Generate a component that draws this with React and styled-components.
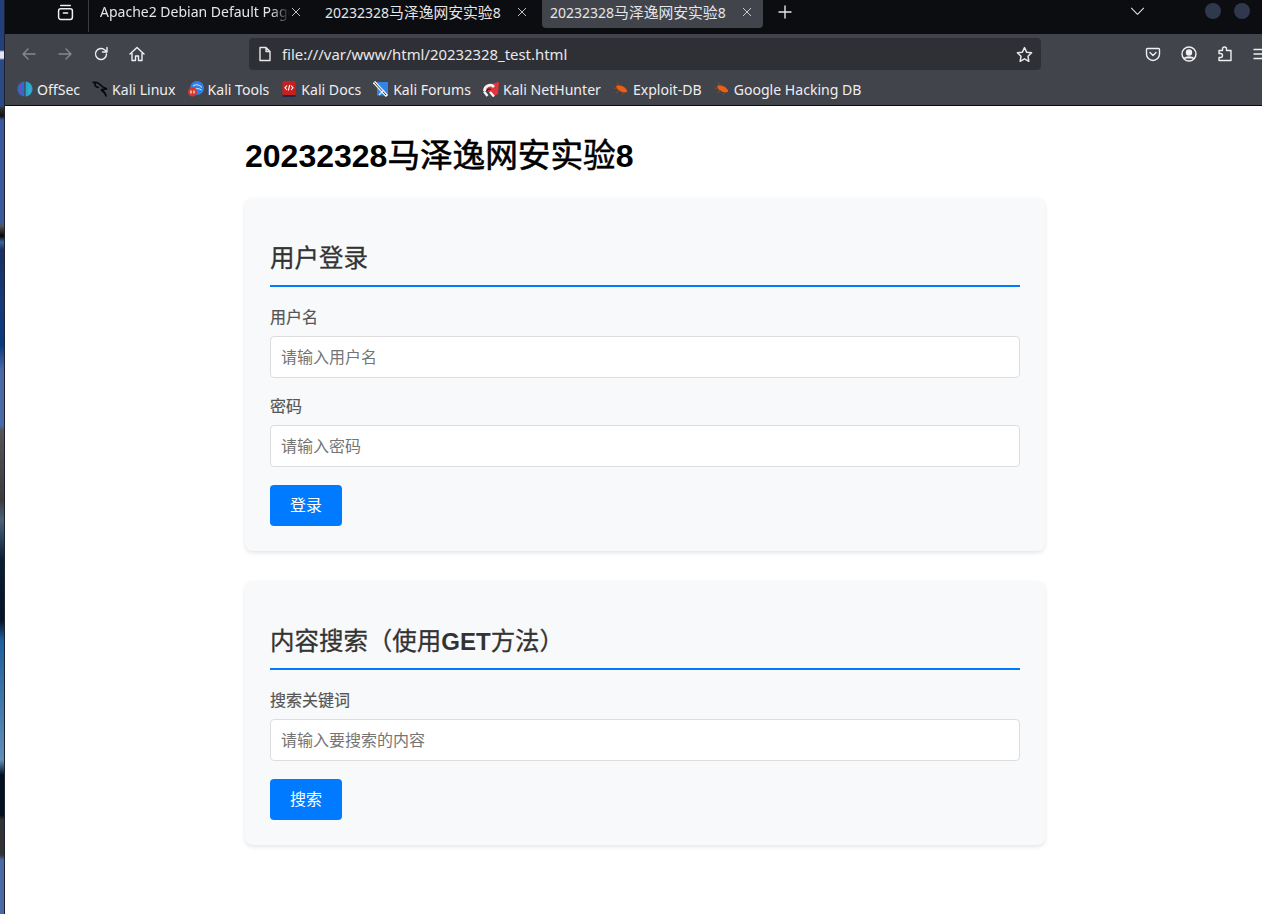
import React from "react";
import styled, { createGlobalStyle } from "styled-components";

const GlobalStyle = createGlobalStyle`
  html, body {
    margin: 0;
    padding: 0;
    height: 914px;
    overflow: hidden;
    background: #fff;
  }
`;

const SANS = `"Liberation Sans", "Noto Sans CJK SC", sans-serif`;
const CHROME = `"Noto Sans", "Noto Sans CJK SC", sans-serif`;

const Desktop = styled.div`
  display: flex;
  width: 1262px;
  height: 914px;
  overflow: hidden;
`;
const Wallpaper = styled.div`
  flex: 0 0 4px;
  background: linear-gradient(
    to bottom,
    #24407a 0, #24407a 50px, #dfe6f0 52px, #dfe6f0 58px, #2a4a86 60px,
    #2a4a86 106px, #333 108px, #111 116px, #3a5a9c 120px, #3a5a9c 222px,
    #555 226px, #050505 236px, #3e659f 242px, #1a3060 250px, #173a78 300px,
    #0a3a80 345px, #4a6aa6 370px, #4a6aa6 426px, #555 430px, #3c3c3c 500px,
    #49637a 520px, #0a1d33 560px, #051426 620px, #1f5f9c 640px, #5f8fb8 760px,
    #02101f 775px, #02101f 815px, #333 820px, #333 855px, #4a6aa6 860px,
    #4a6aa6 914px
  );
  border-right: 1px solid #1c2030;
`;
const Browser = styled.div`
  flex: 0 0 1280px;
  display: flex;
  flex-direction: column;
`;
const TabBar = styled.div`
  height: 34px;
  background: #0c0d11;
  display: flex;
  align-items: flex-start;
  font: 14px ${CHROME};
  color: #e6e6e8;
`;
const TabsButton = styled.div`
  width: 84px;
  height: 32px;
  border-right: 1px solid #3c3d42;
  box-sizing: border-box;
  display: flex;
  align-items: center;
  padding: 0 0 8px 52px;
  color: #f0f0f2;
`;
const Tab = styled.div`
  width: ${(p) => p.$w}px;
  height: 28px;
  box-sizing: border-box;
  padding: 0 ${(p) => p.$pr}px 5px ${(p) => p.$pl}px;
  margin-left: ${(p) => p.$ml || 0}px;
  display: flex;
  align-items: center;
  justify-content: space-between;
  background: ${(p) => (p.$active ? "#42444c" : "transparent")};
  border-radius: 0 0 4px 4px;
  white-space: nowrap;
`;
const TabTitle = styled.span`
  overflow: hidden;
  flex: 1;
  mask-image: ${(p) =>
    p.$fade ? "linear-gradient(to right, #000 90%, transparent)" : "none"};
`;
const TabHan = styled.span`
  font-size: 14.8px;
`;
const NewTab = styled.div`
  margin-left: 14px;
  height: 24px;
  display: flex;
  align-items: center;
`;
const TabBarEnd = styled.div`
  margin-left: 337px;
  display: flex;
  align-items: center;
  height: 22px;
  color: #e6e6e8;
`;
const WindowDot = styled.span`
  width: 16px;
  height: 16px;
  border-radius: 50%;
  background: #30384e;
  margin-left: ${(p) => p.$ml}px;
`;
const Toolbar = styled.div`
  height: 38px;
  box-sizing: border-box;
  padding: 2px 0 0 6px;
  background: #42444c;
  display: flex;
  align-items: center;
  color: #f0f0f2;
`;
const NavButton = styled.div`
  width: 36px;
  display: flex;
  justify-content: center;
  color: ${(p) => (p.$dim ? "#868890" : "#f0f0f2")};
`;
const UrlBar = styled.div`
  margin-left: 94px;
  width: 792px;
  height: 32px;
  background: #2f3036;
  border-radius: 4px;
  display: flex;
  align-items: center;
  padding: 0 8px;
  box-sizing: border-box;
  font: 14.9px ${CHROME};
  color: #e8e8ea;
`;
const UrlText = styled.span`
  flex: 1;
  margin-left: 9px;
`;
const ToolbarIcons = styled.div`
  margin-left: 104px;
  display: flex;
  align-items: center;
  gap: 20px;
`;
const BookmarksBar = styled.div`
  height: 34px;
  box-sizing: border-box;
  padding: 1px 0 0 12px;
  background: #42444c;
  border-bottom: 1px solid #0c0d11;
  display: flex;
  align-items: center;
  font: 14.08px ${CHROME};
  color: #eeeef0;
  white-space: nowrap;
`;
const Bookmark = styled.div`
  display: flex;
  align-items: center;
  gap: 4px;
  margin-right: 12px;
`;
const Page = styled.main`
  flex: 1;
  background: #fff;
  font-family: ${SANS};
`;
const Container = styled.div`
  width: 800px;
  margin: 0 auto;
`;
const Title = styled.h1`
  margin: 0;
  padding-top: 29px;
  height: 63px;
  font-size: 32px;
  line-height: 42px;
  font-weight: 700;
  color: #000;
`;
const Han = styled.span`
  font-size: 1.02em;
  font-weight: 400;
  -webkit-text-stroke: ${(p) => p.$stroke}px currentColor;
`;
const Card = styled.section`
  background: #f8f9fa;
  border-radius: 8px;
  padding: 25px;
  margin-bottom: 30px;
  box-shadow: 0 2px 4px rgba(0, 0, 0, 0.1);
`;
const CardTitle = styled.h2`
  margin: 18px 0 20px;
  padding-bottom: 9px;
  border-bottom: 2px solid #007bff;
  font-size: 24px;
  line-height: 35px;
  font-weight: 700;
  color: #333;
`;
const Field = styled.div`
  margin-bottom: 18px;
`;
const Label = styled.label`
  display: block;
  margin-bottom: 8px;
  font-size: 16px;
  line-height: 21px;
  font-weight: 400;
  color: #555;
  -webkit-text-stroke: 0.2px currentColor;
`;
const Input = styled.input`
  display: block;
  width: 100%;
  height: 42px;
  box-sizing: border-box;
  padding: 11px 10px 9px;
  border: 1px solid #ddd;
  border-radius: 4px;
  background: #fff;
  font: 16px ${SANS};
  &::placeholder {
    color: #757575;
    opacity: 1;
  }
`;
const Button = styled.button`
  display: block;
  width: 72px;
  height: 41px;
  padding: 0 0 3px;
  border: 0;
  border-radius: 4px;
  background: #007bff;
  color: #fff;
  font: 16px ${SANS};
`;

const Svg = ({ size = 16, children, sw = 1.4 }) => (
  <svg
    width={size}
    height={size}
    viewBox="0 0 16 16"
    fill="none"
    stroke="currentColor"
    strokeWidth={sw}
    strokeLinecap="round"
    strokeLinejoin="round"
  >
    {children}
  </svg>
);

const Close = () => (
  <Svg size={12} sw={1.1}>
    <path d="M3 3l10 10M13 3L3 13" />
  </Svg>
);

const Favicon = ({ children }) => (
  <svg width="16" height="16" viewBox="0 0 16 16" style={{ flex: "none" }}>
    {children}
  </svg>
);

const OffSecIcon = () => (
  <Favicon>
    <path d="M7.400 .5C3.400 .8 .5 4 .5 8s2.900 7.200 6.900 7.500z" fill="#2b6fc0" />
    <path d="M8.600 .5c4 .3 6.900 3.500 6.900 7.500s-2.900 7.200-6.900 7.500z" fill="#2aa6c9" />
    <path d="M4.300 2C2.800 3.600 2.300 6 2.300 8s.5 4.400 2 6z" fill="#7a46c4" />
    <path d="M11.700 2c1.500 1.600 2 4 2 6s-.5 4.400-2 6z" fill="#34b0d8" />
  </Favicon>
);
const KaliIcon = () => (
  <Favicon>
    <path
      d="M.5 1.500C4 .5 7 2 9 4.500c1.500 1.800 3.500 2.500 6 3.500-2.500 0-4 0-5 .5 2 1.500 3.500 4 4.500 7-1.200-2.800-3-5-5.500-6.300M3.500 2C2 4 3.500 6.500 7 6.500"
      fill="none"
      stroke="#07080b"
      strokeWidth="1.500"
    />
  </Favicon>
);
const ToolsIcon = () => (
  <Favicon>
    <circle cx="9" cy="7" r="7" fill="#2f7fe6" />
    <path d="M5 5c3-2 6-1.500 9 1.500M7 8.500c2-1.500 4-1 6.500.5" stroke="#e3edfb" strokeWidth="1" fill="none" />
    <circle cx="4.500" cy="11" r="4.500" fill="#d8352a" />
    <path d="M3 9.500v3M6 9.500v3" stroke="#fff" strokeWidth="1.100" />
  </Favicon>
);
const DocsIcon = () => (
  <Favicon>
    <rect x="1.500" y="0" width="13" height="14" rx="1" fill="#c9201f" />
    <rect x="1.500" y="14" width="13" height="2" fill="#26264a" />
    <path d="M6 4.500L4 6.800 6 9M10 4.500l2 2.300L10 9M8.700 4L7.300 9.500" stroke="#fff" strokeWidth="1.100" fill="none" />
  </Favicon>
);
const ForumsIcon = () => (
  <Favicon>
    <path d="M4 1h11v11.500a2 2 0 0 1-2 2H4z" fill="#2f86e8" />
    <path d="M1 1l13 14" stroke="#f4f6f8" strokeWidth="3.200" />
    <path d="M1.500 1.500l11.500 12.500" stroke="#20242c" strokeWidth="0.900" />
    <path d="M6 14l5-5" stroke="#dce9fa" strokeWidth="1.200" />
  </Favicon>
);
const NetHunterIcon = () => (
  <Favicon>
    <path d="M3 4l13-3-1 12-4 2-8-6z" fill="#e0343e" />
    <path d="M1.500 10a5.500 5.500 0 0 1 9.500-4" stroke="#f4f4f4" strokeWidth="2.800" fill="none" />
    <path d="M4.500 15L1 10.500M7 11l4 4.500" stroke="#f4f4f4" strokeWidth="2.400" />
    <path d="M4 10a2.500 2.500 0 0 1 4-1.500" stroke="#20242c" strokeWidth="1.100" fill="none" />
  </Favicon>
);
const ExploitIcon = () => (
  <Favicon>
    <path d="M3 5c3-1.500 7-.5 10 3 1.500 1.500 1.500 3 0 3.300-3.500.7-7.500-1.300-9-3.500z" fill="#ee5f12" />
    <path d="M3.500 1.500l4 3.500M.5 7l4 .5M3 12.500l4-3.500M9 14l2-3" stroke="#8c4a24" strokeWidth="1" />
  </Favicon>
);

const bookmarks = [
  ["OffSec", OffSecIcon],
  ["Kali Linux", KaliIcon],
  ["Kali Tools", ToolsIcon],
  ["Kali Docs", DocsIcon],
  ["Kali Forums", ForumsIcon],
  ["Kali NetHunter", NetHunterIcon],
  ["Exploit-DB", ExploitIcon],
  ["Google Hacking DB", ExploitIcon],
];

const App = () => (
  <Desktop>
    <GlobalStyle />
    <Wallpaper />
    <Browser>
      <TabBar>
        <TabsButton>
          <Svg size={17}>
            <rect x="1.500" y="4.500" width="13" height="10" rx="2" />
            <path d="M3.500 1.500h9M6 8.500h4" />
          </Svg>
        </TabsButton>
        <Tab $w={216} $pl={11} $pr={3}>
          <TabTitle $fade>Apache2 Debian Default Page</TabTitle>
          <Close />
        </Tab>
        <Tab $w={229} $ml={8} $pl={12} $pr={14}>
          <TabTitle>
            20232328<TabHan>马泽逸网安实验</TabHan>8
          </TabTitle>
          <Close />
        </Tab>
        <Tab $w={221} $pl={8} $pr={10} $active>
          <TabTitle>
            20232328<TabHan>马泽逸网安实验</TabHan>8
          </TabTitle>
          <Close />
        </Tab>
        <NewTab>
          <Svg size={16}>
            <path d="M8 2v12M2 8h12" />
          </Svg>
        </NewTab>
        <TabBarEnd>
          <Svg size={15} sw={1.1}>
            <path d="M1.500 4.500L8 11l6.500-6.500" />
          </Svg>
          <WindowDot $ml={60} />
          <WindowDot $ml={13} />
        </TabBarEnd>
      </TabBar>
      <Toolbar>
        <NavButton $dim>
          <Svg>
            <path d="M14 8H2M7 3L2 8l5 5" />
          </Svg>
        </NavButton>
        <NavButton $dim>
          <Svg>
            <path d="M2 8h12M9 3l5 5-5 5" />
          </Svg>
        </NavButton>
        <NavButton>
          <Svg>
            <path d="M13.500 8a5.500 5.500 0 1 1-1.600-3.900L14 6M14 1.500V6H9.500" />
          </Svg>
        </NavButton>
        <NavButton>
          <Svg>
            <path d="M1 8l7-6.500L15 8M3 7v7.500h3.500V10h3v4.500H13V7" />
          </Svg>
        </NavButton>
        <UrlBar>
          <Svg>
            <path d="M3 1.500h6l4 4v9H3zM9 1.500v4h4" />
          </Svg>
          <UrlText>file:///var/www/html/20232328_test.html</UrlText>
          <Svg size={17}>
            <path d="M8 1.500l2 4.300 4.700.6-3.400 3.300.8 4.700L8 12.100l-4.100 2.300.8-4.700L1.300 6.400 6 5.800z" />
          </Svg>
        </UrlBar>
        <ToolbarIcons>
          <Svg>
            <path d="M2.500 2.500h11a1 1 0 0 1 1 1V8a6.500 6.500 0 0 1-13 0V3.500a1 1 0 0 1 1-1zM5 6.500L8 9.500l3-3" />
          </Svg>
          <Svg>
            <circle cx="8" cy="8" r="7" />
            <circle cx="8" cy="6.500" r="2.500" fill="currentColor" />
            <path d="M3.500 12.500c1-2 8-2 9 0" fill="currentColor" />
          </Svg>
          <Svg>
            <path d="M2 5h3.500V3.500a2 2 0 0 1 4 0L9.500 5H14v10H2v-3h1.500a1.500 1.500 0 0 0 0-4H2z" transform="translate(0 -0.500)" />
          </Svg>
          <Svg>
            <path d="M1 3.500h14M1 8h14M1 12.500h14" />
          </Svg>
        </ToolbarIcons>
      </Toolbar>
      <BookmarksBar>
        {bookmarks.map(([name, Icon]) => (
          <Bookmark key={name}>
            <Icon />
            {name}
          </Bookmark>
        ))}
      </BookmarksBar>
      <Page>
        <Container>
          <Title>
            20232328<Han $stroke={0.6}>马泽逸网安实验</Han>8
          </Title>
          <Card>
            <CardTitle>
              <Han $stroke={0.3}>用户登录</Han>
            </CardTitle>
            <Field>
              <Label>用户名</Label>
              <Input placeholder="请输入用户名" />
            </Field>
            <Field>
              <Label>密码</Label>
              <Input type="password" placeholder="请输入密码" />
            </Field>
            <Button>登录</Button>
          </Card>
          <Card>
            <CardTitle>
              <Han $stroke={0.3}>内容搜索（使用</Han>GET<Han $stroke={0.3}>方法）</Han>
            </CardTitle>
            <Field>
              <Label>搜索关键词</Label>
              <Input placeholder="请输入要搜索的内容" />
            </Field>
            <Button>搜索</Button>
          </Card>
        </Container>
      </Page>
    </Browser>
  </Desktop>
);

export default App;
